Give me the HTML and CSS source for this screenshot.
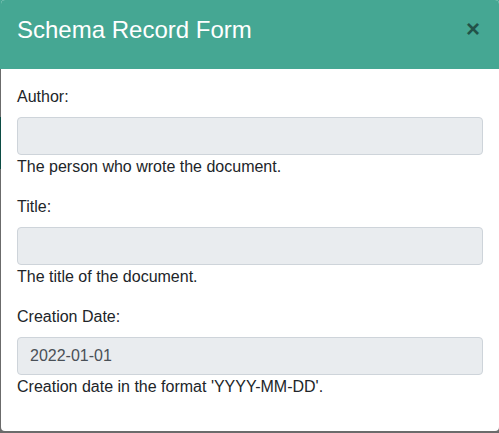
FILE: index.html
```html
<!DOCTYPE html>
<html lang="en">
<head>
<meta charset="utf-8">
<title>Schema Record Form</title>
<link rel="stylesheet" href="styles.css">
</head>
<body>
<div class="modal">
  <div class="modal-header">
    <h5 class="modal-title">Schema Record Form</h5>
    <button class="close" type="button" aria-label="Close">×</button>
  </div>
  <div class="modal-body">
    <div class="form-group">
      <label class="form-label">Author:</label>
      <input class="form-control" type="text" readonly>
      <div class="help">The person who wrote the document.</div>
    </div>
    <div class="form-group">
      <label class="form-label">Title:</label>
      <input class="form-control" type="text" readonly>
      <div class="help">The title of the document.</div>
    </div>
    <div class="form-group">
      <label class="form-label">Creation Date:</label>
      <input class="form-control" type="text" value="2022-01-01" readonly>
      <div class="help">Creation date in the format 'YYYY-MM-DD'.</div>
    </div>
  </div>
</div>
</body>
</html>
```

FILE: styles.css
```css
* { box-sizing: border-box; }
html, body { height: 100%; }
body {
  margin: 0;
  overflow: hidden;
  font-family: "Liberation Sans", Arial, sans-serif;
  font-size: 16px;
  line-height: 1.5;
  color: #212529;
  background: linear-gradient(to bottom,
    #45a793 0, #45a793 69px,
    #6b6b6b 69px, #6b6b6b 117px,
    #0c4c44 117px, #0c4c44 169px,
    #6b6b6b 169px);
}
.modal {
  width: 500px;
  margin-top: -1px;
  background: #fff;
  background-clip: padding-box;
  border: 1px solid transparent;
  border-radius: 5px;
  overflow: hidden;
}
.modal-header {
  height: 69px;
  background: #45a793;
  display: flex;
  align-items: flex-start;
  justify-content: space-between;
  padding: 16px 16px 0 16px;
}
.modal-title {
  margin: 0;
  font-size: 24px;
  font-weight: 400;
  line-height: 1.2;
  color: #fff;
}
.close {
  border: 0;
  background: transparent;
  padding: 0;
  margin: -1px 3px 0 0;
  font-family: "Liberation Sans", Arial, sans-serif;
  font-size: 24px;
  font-weight: 700;
  line-height: 1.2;
  color: #000;
  opacity: 0.5;
  cursor: pointer;
}
.modal-body {
  padding: 16px;
}
.form-group {
  margin-bottom: 16px;
}
.form-label {
  display: block;
  margin-bottom: 8px;
}
.form-control {
  display: block;
  width: 100%;
  height: 38px;
  padding: 6px 12px;
  font-family: inherit;
  font-size: 16px;
  line-height: 24px;
  color: #495057;
  background: #e9ecef;
  border: 1px solid #ced4da;
  border-radius: 4px;
  outline: none;
}
.help {
  color: #212529;
}
```
